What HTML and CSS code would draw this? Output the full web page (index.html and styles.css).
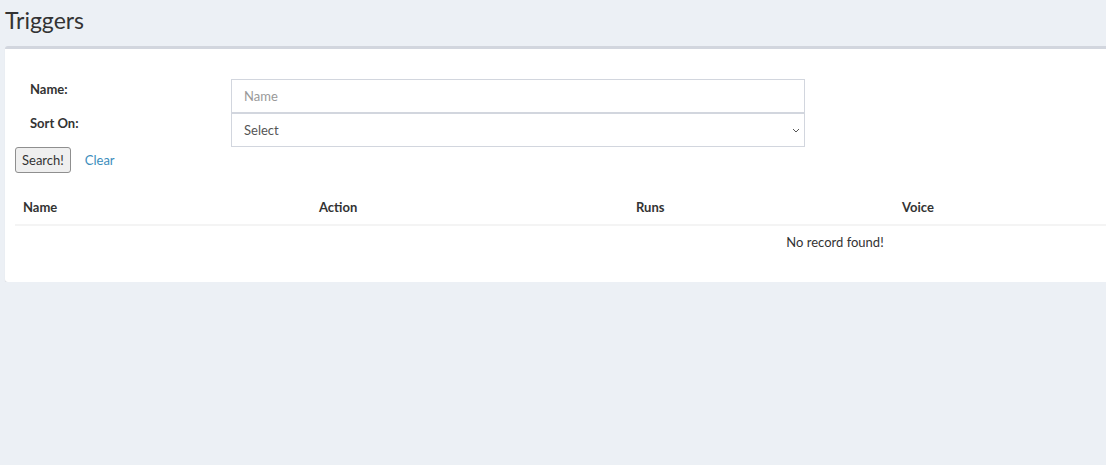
FILE: index.html
```html
<!DOCTYPE html>
<html lang="en">
<head>
  <meta charset="UTF-8" />
  <title>Triggers</title>
  <link rel="stylesheet" href="styles.css">
</head>
<body>
  <div class="page">
    <!-- Page header -->
    <h1 class="page-title">Triggers</h1>

    <!-- Search box -->
    <div class="box">
      <form class="search-form" onsubmit="return false;">
        <label class="form-label" for="name">Name:</label>
        <input type="text" id="name" class="form-control" placeholder="Name">
        <label class="form-label" for="sort">Sort On:</label>
        <select id="sort" class="form-control">
          <option>Select</option>
        </select>
      </form>
      <div class="form-actions">
        <button class="btn">Search!</button>
        <a href="#" class="link">Clear</a>
      </div>

      <!-- Results -->
      <div class="table-wrap">
        <table class="results">
          <thead>
            <tr>
              <th class="col-name">Name</th>
              <th class="col-action">Action</th>
              <th class="col-runs">Runs</th>
              <th class="col-voice">Voice</th>
            </tr>
          </thead>
          <tbody>
            <tr>
              <td colspan="4" class="empty">No record found!</td>
            </tr>
          </tbody>
        </table>
      </div>
    </div>
  </div>
</body>
</html>
```

FILE: styles.css
```css
/* Global styles */
body {
  margin: 0;
  background: #ecf0f5;
  color: #333;
  font-family: Lato, "Liberation Sans", sans-serif;
  font-size: 13px;
}
.page {
  width: 100%;
  overflow: hidden;
}
.page-title {
  margin: 0;
  padding: 6px 5px 0;
  height: 40px;
  font-size: 23px;
  font-weight: normal;
  color: #333;
}
/* Box */
.box {
  margin-left: 5px;
  margin-right: -20px;
  background: #fff;
  border-top: 3px solid #d2d6de;
  border-radius: 3px;
  box-shadow: 0 1px 1px rgba(0,0,0,0.1);
  padding: 30px 10px 10px;
  overflow: hidden;
}
/* Search form */
.search-form {
  display: grid;
  grid-template-columns: 216px 574px;
  grid-auto-rows: 34px;
}
.form-label {
  font-weight: bold;
  padding: 2px 0 0 15px;
}
.form-control {
  box-sizing: border-box;
  height: 34px;
  width: 574px;
  margin: 0;
  border: 1px solid #d2d6de;
  background: #fff;
  padding: 6px 12px;
  font: inherit;
  color: #555;
  border-radius: 0;
}
.form-control::placeholder {
  color: #999;
}
select.form-control {
  appearance: none;
  background-image: url("data:image/svg+xml;utf8,<svg xmlns='http://www.w3.org/2000/svg' width='8' height='5' viewBox='0 0 8 5'><path d='M1 1l3 3 3-3' fill='none' stroke='%23555' stroke-width='1'/></svg>");
  background-repeat: no-repeat;
  background-position: right 4px center;
}
.form-actions {
  display: flex;
  align-items: center;
  gap: 14px;
}
.btn {
  font: inherit;
  height: 26px;
  padding: 0 6px;
  background: #efefef;
  color: #333;
  border: 1px solid #8f8f8f;
  border-radius: 3px;
}
.link {
  color: #3c8dbc;
  text-decoration: none;
}
/* Results table */
.table-wrap {
  overflow: hidden;
}
.results {
  margin-top: 17px;
  width: 1640px;
  border-collapse: collapse;
}
.results th {
  text-align: left;
  padding: 9px 8px;
  border-bottom: 2px solid #f4f4f4;
}
.results td {
  padding: 8px;
}
.col-name { width: 280px; }
.col-action { width: 301px; }
.col-runs { width: 250px; }
.empty {
  text-align: center;
  height: 30px;
  vertical-align: top;
}
```
